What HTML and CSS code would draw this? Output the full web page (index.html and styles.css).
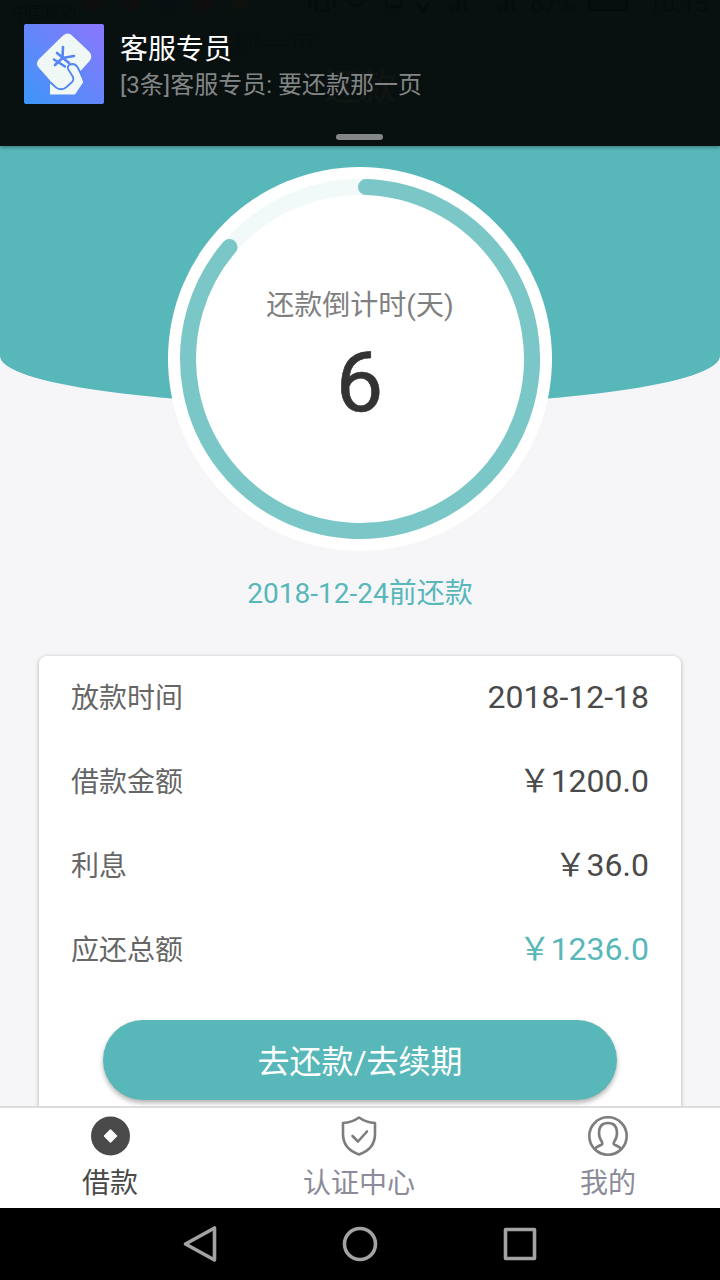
FILE: index.html
```html
<!DOCTYPE html>
<html lang="zh-CN">
<head>
  <meta charset="UTF-8">
  <meta name="viewport" content="width=device-width, initial-scale=1.0">
  <title>还款</title>
  <link rel="stylesheet" href="styles.css">
</head>
<body>
  <div class="phone">
    <div class="page">
      <div class="status-bar">
        <span class="carrier">中国移动</span>
        <span class="status-icons">
          <i class="dot red"></i>
          <i class="dot red"></i>
          <i class="dot blue"></i>
          <i class="dot red"></i>
          <i class="dot orange"></i>
        </span>
        <svg class="signal" viewBox="0 0 210 16">
          <path d="M4 0v8M10 0v11h12V0M28 0v8M42 0a9 9 0 0 0 16 0M80 0v7h15V0M111 3l6 9 6-9M145 6v5M152 0v11M159 0v11M193 6v5M200 0v11M207 0v11"/>
        </svg>
        <span class="battery">87%</span>
        <i class="battery-icon"></i>
        <span class="time">10:15</span>
      </div>
      <div class="ticker">那一页</div>
      <div class="title-bar">还款</div>

      <div class="notice">
        <svg class="notice-icon" viewBox="0 0 80 80">
          <defs>
            <linearGradient id="bg" x1="0" y1="1" x2="1" y2="0">
              <stop offset="0" stop-color="#3c96f7"/>
              <stop offset="1" stop-color="#8c76fd"/>
            </linearGradient>
          </defs>
          <rect width="80" height="80" rx="2" fill="url(#bg)"/>
          <path class="notice-paper" d="M26 50v20.500h25l8-12-5-13z"/>
          <path class="notice-paper" d="M39 11.500q5-4 9 0l17 16q4 4.500 1 9L42 63q-5 4-10 0L15 44q-4-4.500 0-9z"/>
          <path class="notice-paper" d="M44 44q1-5 5-4 4 1 5 4l5 14-8 8-9-1 7-12z"/>
          <path class="notice-hand" d="M26 58l6 5.500q5 3.500 10 0l6-5.500q2-2 1-5l-5-8q-1-4.500 4-5 4 0 6 4l4 8"/>
          <path class="notice-yen" d="M39 23l-.5 11 11.500-2M38.500 34L31 41M33 29l12 10M30 35.500l11 7"/>
        </svg>
        <div class="notice-body">
          <div class="notice-title">客服专员</div>
          <div class="notice-text">[3条]客服专员: 要还款那一页</div>
        </div>
        <span class="notice-handle"></span>
      </div>

      <div class="hero">
        <div class="circle">
          <svg class="ring" viewBox="0 0 384 384">
            <circle class="ring-track" cx="192" cy="192" r="172"/>
            <path class="ring-value" d="M198 20.1A172 172 0 1 1 61.500 80"/>
          </svg>
          <div class="circle-label">还款倒计时(天)</div>
          <div class="circle-days">6</div>
        </div>
      </div>
      <div class="deadline">2018-12-24前还款</div>

      <div class="card">
        <div class="row"><span class="label">放款时间</span><span class="value">2018-12-18</span></div>
        <div class="row"><span class="label">借款金额</span><span class="value">￥1200.0</span></div>
        <div class="row"><span class="label">利息</span><span class="value">￥36.0</span></div>
        <div class="row"><span class="label">应还总额</span><span class="value total">￥1236.0</span></div>
        <button class="btn">去还款/去续期</button>
      </div>
    </div>

    <div class="tab-bar">
      <div class="tab active">
        <svg class="tab-icon" viewBox="0 0 40 40">
          <circle cx="20.500" cy="20" r="19.500" fill="#4a4a4a"/>
          <path d="M20.500 14l6 6-6 6-6-6z" fill="#fff" stroke="#fff" stroke-width="1.500" stroke-linejoin="round"/>
        </svg>
        <span>借款</span>
      </div>
      <div class="tab">
        <svg class="tab-icon line" viewBox="0 0 40 40">
          <path d="M20 1.500q7 5 16 5.500V18q0 15-16 20.500Q4 33 4 18V7q9-.5 16-5.500z"/>
          <path d="M13.500 20l5.500 5.500 9-10"/>
        </svg>
        <span>认证中心</span>
      </div>
      <div class="tab">
        <svg class="tab-icon line" viewBox="0 0 40 40">
          <circle cx="20" cy="20" r="18.700"/>
          <path d="M7 33q1-2 6-4 2-1 1-3-3-4-3-9 0-10 9-10t9 10q0 5-3 9-1 2 1 3 5 2 6 4"/>
        </svg>
        <span>我的</span>
      </div>
    </div>

    <div class="nav-bar">
      <svg viewBox="0 0 40 40"><path d="M34.500 4v32L5.500 20z"/></svg>
      <svg viewBox="0 0 40 40"><circle cx="20" cy="20" r="15.500"/></svg>
      <svg viewBox="0 0 40 40"><rect x="5.500" y="5.500" width="29" height="29"/></svg>
    </div>
  </div>
</body>
</html>
```
FILE: styles.css
```css
* {
  box-sizing: border-box;
}
body {
  margin: 0;
  font-family: Roboto, "Noto Sans CJK SC", sans-serif;
  color: #4a4a4a;
}
.phone {
  display: flex;
  flex-direction: column;
  width: 720px;
  height: 1280px;
  overflow: hidden;
}
.page {
  position: relative;
  flex: 1;
  min-height: 0;
  overflow: hidden;
  background: #f6f6f9;
}

/* status bar and title, under the notification */
.status-bar {
  display: flex;
  align-items: flex-start;
  height: 32px;
  padding: 0 12px;
  background: #58b7b9;
  color: #055;
  font-size: 24px;
  line-height: 8px;
}
.carrier {
  width: 74px;
  padding-top: 9px;
  font-size: 16px;
}
.status-icons {
  display: flex;
  gap: 18px;
  width: 220px;
}
.dot {
  width: 18px;
  height: 12px;
  border-radius: 0 0 9px 9px;
  opacity: .5;
}
.dot.red {
  background: #f33;
}
.dot.blue {
  background: #06c;
}
.dot.orange {
  background: #f90;
}
.signal {
  width: 210px;
  height: 16px;
  fill: none;
  stroke: #055;
  stroke-width: 3;
}
.battery {
  width: 56px;
  padding-left: 14px;
}
.battery-icon {
  width: 40px;
  height: 11px;
  margin-left: 16px;
  border: 2px solid #055;
  border-top: 0;
  background: #288;
}
.time {
  margin-left: auto;
}
.ticker {
  height: 18px;
  padding-left: 233px;
  overflow: hidden;
  background: #58b7b9;
  color: #288;
  font-size: 28px;
  line-height: 30px;
}
.title-bar {
  height: 96px;
  padding-top: 14px;
  background: #58b7b9;
  color: #fff;
  font-size: 36px;
  line-height: 48px;
  text-align: center;
}

/* notification */
.notice {
  position: absolute;
  top: 0;
  left: 0;
  z-index: 2;
  display: flex;
  gap: 16px;
  width: 100%;
  height: 146px;
  padding: 24px;
  background: rgba(5, 9, 8, .955);
  box-shadow: 0 1px 4px rgba(0, 0, 0, .4);
}
.notice-icon {
  width: 80px;
  height: 80px;
}
.notice-paper {
  fill: #f0f8f6;
}
.notice-hand,
.notice-yen {
  fill: none;
  stroke: #5385f5;
  stroke-width: 1.8;
  stroke-linecap: round;
}
.notice-yen {
  stroke-width: 2.6;
}
.notice-title {
  padding-top: 8px;
  color: #fff;
  font-size: 28px;
  line-height: 36px;
}
.notice-text {
  padding-top: 1px;
  color: #828585;
  font-size: 24px;
  line-height: 32px;
}
.notice-handle {
  position: absolute;
  bottom: 6px;
  left: 336px;
  width: 47px;
  height: 6px;
  border-radius: 3px;
  background: #848787;
}

/* countdown */
.hero {
  height: 260px;
  padding-top: 21px;
  border-radius: 0 0 50% 50% / 0 0 50px 50px;
  background: #58b7b9;
}
.circle {
  position: relative;
  width: 384px;
  height: 384px;
  margin: 0 auto;
  padding-top: 119px;
  border-radius: 50%;
  background: #fff;
  text-align: center;
}
.ring {
  position: absolute;
  top: 0;
  left: 0;
  width: 100%;
  height: 100%;
  fill: none;
  stroke-width: 16;
  stroke-linecap: round;
}
.ring-track {
  stroke: #f1f9f9;
}
.ring-value {
  stroke: #7bc7c8;
}
.circle-label {
  color: #808080;
  font-size: 28px;
  line-height: 40px;
}
.circle-days {
  padding-right: 1px;
  color: #333;
  font-size: 84px;
  line-height: 113px;
  -webkit-text-stroke: .7px #333;
}
.deadline {
  margin-top: 168px;
  color: #58b7b9;
  font-size: 28px;
  line-height: 40px;
  text-align: center;
}

/* loan info */
.card {
  height: 500px;
  margin: 42px 39px 0;
  padding: 0 32px;
  border-radius: 8px;
  background: #fff;
  box-shadow: 0 1px 4px rgba(0, 0, 0, .3);
}
.row {
  display: flex;
  justify-content: space-between;
  height: 84px;
  padding-top: 21px;
  line-height: 40px;
}
.label {
  padding-top: 2px;
  color: #666;
  font-size: 28px;
}
.value {
  font-size: 32px;
}
.value.total {
  color: #58b7b9;
}
.btn {
  display: block;
  width: 514px;
  height: 80px;
  margin: 28px auto 0;
  padding: 0 0 2px;
  border: 0;
  border-radius: 40px;
  background: #58b7b9;
  box-shadow: 0 3px 5px rgba(0, 0, 0, .3);
  color: #fff;
  font-family: inherit;
  font-size: 32px;
}

/* bottom tabs */
.tab-bar {
  display: flex;
  justify-content: space-between;
  height: 102px;
  padding: 8px 52px 0 50px;
  border-top: 2px solid #dcdcdc;
  background: #fff;
}
.tab {
  display: flex;
  flex-direction: column;
  align-items: center;
  width: 120px;
  color: #8b8b99;
  font-size: 28px;
  line-height: 40px;
}
.tab.active {
  color: #4a4a4a;
}
.tab-icon {
  width: 40px;
  height: 40px;
  margin-bottom: 8px;
}
.tab-icon.line {
  fill: none;
  stroke: #7d7d7d;
  stroke-width: 2.6;
  stroke-linecap: round;
  stroke-linejoin: round;
}

/* system navigation */
.nav-bar {
  display: flex;
  justify-content: center;
  align-items: center;
  gap: 120px;
  height: 72px;
  background: #000;
}
.nav-bar svg {
  width: 40px;
  height: 40px;
  fill: none;
  stroke: #a3a3a3;
  stroke-width: 3.6;
  stroke-linejoin: round;
}
```
